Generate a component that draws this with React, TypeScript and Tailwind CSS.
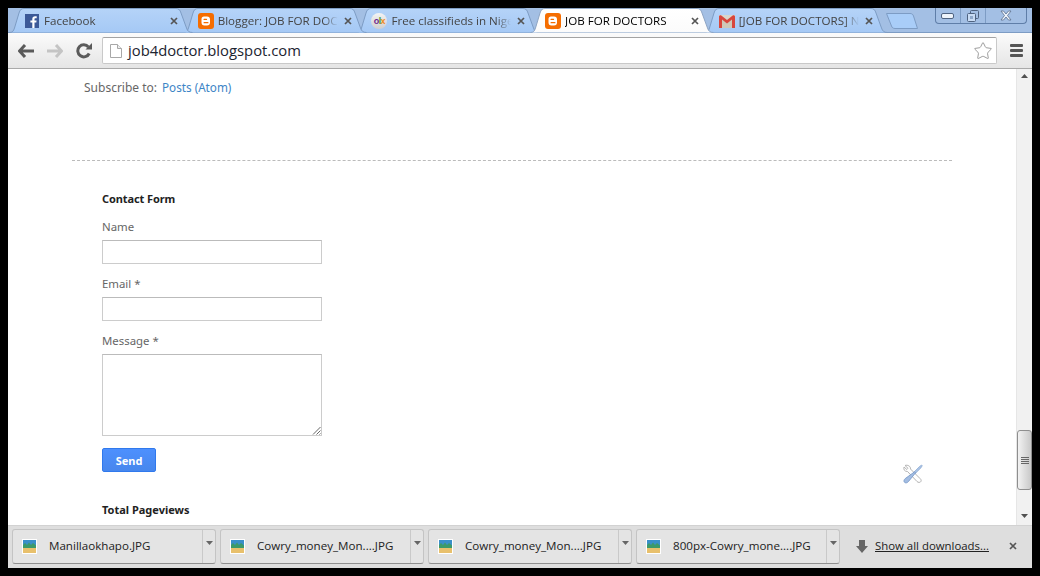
import { ReactNode } from "react";
import { Star } from "lucide-react";

const uiFont = "font-['Open_Sans','Noto_Sans',sans-serif]";
const pageFont = "font-['Noto_Sans','Open_Sans',sans-serif]";

function BloggerIcon() {
  return (
    <svg width="16" height="16" viewBox="0 0 16 16">
      <rect width="16" height="16" rx="3" fill="#f56d00" />
      <path d="M6 3.500h3a3 3 0 0 1 3 3V9.500a3 3 0 0 1-3 3H6.500a3 3 0 0 1-3-3V6a2.500 2.500 0 0 1 2.500-2.500z" fill="#fff" />
      <rect x="5.500" y="5.700" width="3.600" height="1.300" rx=".6" fill="#f56d00" />
      <rect x="5.500" y="9" width="5" height="1.300" rx=".6" fill="#f56d00" />
    </svg>
  );
}

function FacebookIcon() {
  return (
    <svg width="14" height="14" viewBox="0 0 14 14">
      <rect width="14" height="14" fill="#3b5998" />
      <path d="M9.500 14V8.600h1.800l.3-2.100H9.500V5.200c0-.6.200-1 1-1h1.200V2.300c-.3 0-.9-.1-1.600-.1-1.700 0-2.800 1-2.800 2.800v1.500H5.400v2.100h1.900V14z" fill="#fff" />
    </svg>
  );
}

function OlxIcon() {
  return (
    <span className="flex h-4 w-4 items-center justify-center rounded-full bg-gradient-to-b from-[#f4f4f4] to-[#cfcfcf] font-['Liberation_Sans',sans-serif] text-[9px] leading-none font-bold tracking-[-0.6px]">
      <span className="text-[#6d2a8c]">o</span>
      <span className="text-[#4c9a3a]">l</span>
      <span className="text-[#ee8a1d]">x</span>
    </span>
  );
}

function GmailIcon() {
  return (
    <svg width="16" height="13" viewBox="0 0 16 13">
      <rect width="16" height="13" fill="#d9d6cc" />
      <path d="M3 13V4l5 4 5-4v9z" fill="#cfc9b8" />
      <path d="M0 13V1.500C0 .5 1.300-.3 2.300.5L8 5l5.700-4.500c1-.8 2.300 0 2.300 1V13h-3V4.500L8 8.400 3 4.500V13z" fill="#d8473d" />
    </svg>
  );
}

type TabData = { title: string; icon: ReactNode; active?: boolean; order: string };

const tabs: TabData[] = [
  { title: "Facebook", icon: <FacebookIcon />, order: "z-[5]" },
  { title: "Blogger: JOB FOR DOCTORS", icon: <BloggerIcon />, order: "z-[4]" },
  { title: "Free classifieds in Nigeria", icon: <OlxIcon />, order: "z-[3]" },
  { title: "JOB FOR DOCTORS", icon: <BloggerIcon />, active: true, order: "z-[6]" },
  { title: "[JOB FOR DOCTORS] New comment", icon: <GmailIcon />, order: "z-[2]" },
];

function Tab({ title, icon, active, order }: TabData) {
  return (
    <div className={`relative -ml-[10.3px] h-[25px] w-[184px] shrink-0 first:ml-0 ${order}`}>
      <svg className="absolute top-0 left-0" width="184" height="25" viewBox="0 0 184 25">
        <defs>
          <linearGradient id="tabIdle" x1="0" y1="0" x2="0" y2="1">
            <stop offset="0" stopColor="#b5d3f8" />
            <stop offset="1" stopColor="#a5c9f5" />
          </linearGradient>
          <linearGradient id="tabOn" x1="0" y1="0" x2="0" y2="1">
            <stop offset="0" stopColor="#ffffff" />
            <stop offset="1" stopColor="#fbfbfb" />
          </linearGradient>
        </defs>
        <path
          d="M0.500 24.500C3.500 24.500 4.500 23 5.500 20L10 5C11 2 12 .5 15 .5H167C170 .5 171 2 172 5L177.500 20C178.500 23 180 24.500 183.500 24.500"
          fill={active ? "url(#tabOn)" : "url(#tabIdle)"}
          stroke={active ? "#8ea5c4" : "#7d9cc4"}
        />
      </svg>
      <div className={`relative flex h-[25px] items-center pt-px pr-2 pl-[15px] ${uiFont} text-[11.6px]`}>
        <span className="flex h-4 w-4 shrink-0 items-center justify-center">{icon}</span>
        <span
          className={`ml-1 w-[120px] shrink-0 overflow-hidden whitespace-nowrap [mask-image:linear-gradient(to_right,black_88%,transparent)] ${
            active ? "text-black" : "text-[#444]"
          }`}
        >
          {title}
        </span>
        <svg className="ml-1.5 shrink-0" width="8" height="8" viewBox="0 0 8 8">
          <path d="M1 1l6 6M7 1L1 7" stroke="#555" strokeWidth="1.700" />
        </svg>
      </div>
    </div>
  );
}

function TabStrip() {
  return (
    <div className="relative flex h-[25px] shrink-0 items-start bg-[#a3bfe4] pl-px">
      {tabs.map((tab) => (
        <Tab key={tab.title} {...tab} />
      ))}
      <svg className="relative mt-[5px] ml-[-2px] shrink-0" width="33" height="16" viewBox="0 0 33 16">
        <path
          d="M.500.500H24C26 .500 27 1.500 27.500 3L31.500 15.500H9C7 15.500 6 14.500 5.500 13z"
          fill="#a9cdf8"
          stroke="#7d9cc4"
        />
      </svg>
      <WindowControls />
      <div className="absolute right-0 bottom-0 left-0 h-px bg-[#7d9cc4]" />
    </div>
  );
}

function WindowControls() {
  return (
    <div className="relative ml-4 flex h-4 w-[92px] shrink-0 rounded-b-[4px] border border-t-0 border-[#5f7ea8] bg-[#a3bfe4]">
      <div className="flex w-[25px] items-center justify-center border-r border-[#7d9cc4]">
        <svg width="13" height="6" viewBox="0 0 13 6">
          <rect x=".500" y=".500" width="12" height="5" rx="1.500" fill="#eef4fb" stroke="#4f6380" />
        </svg>
      </div>
      <div className="flex w-[25px] items-center justify-center border-r border-[#7d9cc4]">
        <svg width="12" height="12" viewBox="0 0 12 12">
          <rect x="3.500" y=".500" width="8" height="8" rx="1" fill="none" stroke="#4f6380" />
          <rect x=".500" y="3.500" width="8" height="8" rx="1" fill="#c9dcf4" stroke="#4f6380" />
          <rect x="3" y="6" width="3" height="3" fill="#8fa9cb" />
        </svg>
      </div>
      <div className="flex flex-1 items-center justify-center">
        <svg width="12" height="11" viewBox="0 0 12 11">
          <path d="M1 1h2.500L6 4l2.500-3H11L7.500 5.500 11 10H8.500L6 7l-2.500 3H1l3.500-4.500z" fill="#eef4fb" stroke="#5b6f8c" strokeWidth=".8" />
        </svg>
      </div>
    </div>
  );
}

function Toolbar() {
  return (
    <div className="flex h-9 shrink-0 items-center border-b border-[#a9a9a9] bg-gradient-to-b from-[#fbfbfb] to-[#e5e5e5] pr-[9px] pl-2.5">
      <svg width="16" height="14" viewBox="0 0 16 14">
        <path d="M7 1L1.500 7 7 13M2 7h14" fill="none" stroke="#5a5a5a" strokeWidth="3" />
      </svg>
      <svg className="ml-[13px]" width="16" height="14" viewBox="0 0 16 14">
        <path d="M9 1l5.500 6L9 13M14 7H0" fill="none" stroke="#c4c4c4" strokeWidth="3" />
      </svg>
      <svg className="ml-[13px]" width="16" height="16" viewBox="0 0 16 16">
        <path d="M13.200 10.500A6 6 0 1 1 12.400 4" fill="none" stroke="#5a5a5a" strokeWidth="3" />
        <path d="M9.500 6.500H16V0z" fill="#5a5a5a" />
      </svg>
      <div className="ml-[10px] flex h-[27px] w-[895px] shrink-0 items-center rounded-[2px] border border-[#c9c9c9] border-t-[#a3a3a3] bg-white pr-[3px] pl-[7px]">
        <svg width="12" height="14" viewBox="0 0 12 14">
          <path d="M.500.500H7.500L11.500 4.500V13.500H.500z" fill="#fff" stroke="#a8a8a8" />
          <path d="M7.500.500V4.500H11.500" fill="#eee" stroke="#a8a8a8" />
        </svg>
        <span className={`ml-[6px] flex-1 ${uiFont} text-[14.8px] text-[#1c2430]`}>job4doctor.blogspot.com</span>
        <Star className="text-[#8a8a8a]" size={20} strokeWidth={1} />
      </div>
      <div className="ml-[13px] flex w-[13px] flex-col gap-[2px]">
        <div className="h-[3px] rounded-[1px] bg-[#555]" />
        <div className="h-[3px] rounded-[1px] bg-[#555]" />
        <div className="h-[3px] rounded-[1px] bg-[#555]" />
      </div>
    </div>
  );
}

function ToolsIcon() {
  return (
    <svg width="20" height="20" viewBox="0 0 20 20">
      <path
        d="M2 1.500L5 4.300 3.800 5.500 1 3C.300 5.500 1.500 7.500 4.500 7.500L14 17.500C15 18.800 17.500 18.700 18 17.300 18.500 16 17.800 15.300 17 14.500L7.500 5C7.800 2.500 5 .500 2 1.500z"
        fill="#fff"
        stroke="#b4b4b4"
        strokeWidth="1"
      />
      <path d="M10.500 8.500L16.500 2.500 18.500 1 19.300 1.800 17.800 4 11.800 10z" fill="#a9c3e6" stroke="#7f9fcb" strokeWidth=".6" />
      <path d="M11.600 7.800L12.600 8.800 5.500 17.500C4.300 19 2.500 19.300 1.500 18.300.500 17.300.900 15.700 2.300 14.500z" fill="#a3bde2" stroke="#7396c6" strokeWidth=".8" />
    </svg>
  );
}

function PageScrollbar() {
  return (
    <div className="flex w-4 shrink-0 flex-col items-center border-l border-[#e6e6e6] bg-[#f1f1f1]">
      <svg className="mt-[5px]" width="7" height="4" viewBox="0 0 7 4">
        <path d="M3.500 0L7 4H0z" fill="#505050" />
      </svg>
      <div className="mt-[352px] flex h-[60px] w-[15px] flex-col items-center justify-center gap-px rounded-[3px] border border-[#8e8e8e] bg-gradient-to-r from-[#f2f2f2] to-[#c9c9c9]">
        <div className="h-px w-2 bg-[#666]" />
        <div className="h-px w-2 bg-[#666]" />
        <div className="h-px w-2 bg-[#666]" />
        <div className="h-px w-2 bg-[#666]" />
      </div>
      <svg className="mt-6" width="7" height="4" viewBox="0 0 7 4">
        <path d="M0 0H7L3.500 4z" fill="#505050" />
      </svg>
    </div>
  );
}

function Field({ label, className }: { label: string; className: string }) {
  return (
    <div className="flex flex-col">
      <label className="h-4 text-[11.4px] leading-4 text-[#666]">{label}</label>
      <div className={`mt-[5px] w-[220px] border border-[#ccc] border-t-[#bbb] ${className}`} />
    </div>
  );
}

function PageContent() {
  return (
    <div className={`relative flex-1 overflow-hidden bg-white ${pageFont}`}>
      <p className="mt-[10px] ml-[76px] flex h-4 items-baseline gap-[5px] text-xs leading-4 text-[#666]">
        <span>Subscribe to:</span>
        <span className="text-[11.7px] text-[#3d85c6]">Posts (Atom)</span>
      </p>
      <div className="mt-[65px] ml-16 w-[880px] border-t border-dashed border-[#bbb]" />
      <div className="mt-[30px] ml-[94px] flex flex-col">
        <h2 className="h-4 text-[11px] leading-4 font-bold tracking-[-0.1px] text-[#222]">Contact Form</h2>
        <div className="mt-3 flex flex-col gap-3">
          <Field label="Name" className="h-6" />
          <Field label="Email *" className="h-6" />
          <Field label="Message *" className="h-[82px]" />
        </div>
        <button className="mt-3 h-6 w-[54px] rounded-[2px] border border-[#3079ed] bg-gradient-to-b from-[#4d90fe] to-[#4787ed] pt-[2px] text-[11px] font-bold text-white">
          Send
        </button>
        <h2 className="mt-[30px] h-4 text-[11px] leading-4 font-bold text-[#222]">Total Pageviews</h2>
      </div>
      <div className="absolute top-[395px] left-[895px]">
        <ToolsIcon />
      </div>
      <svg className="absolute top-[357px] left-[304px]" width="9" height="9" viewBox="0 0 9 9">
        <path d="M8.500 1L1 8.500M8.500 4.500L4.500 8.500M8.500 7.500L7.500 8.500" stroke="#666" />
      </svg>
    </div>
  );
}

function ImageThumb() {
  return (
    <svg width="15" height="15" viewBox="0 0 15 15">
      <rect width="15" height="15" fill="#fff" />
      <rect x="1" y="1" width="13" height="6" fill="#3a8fc9" />
      <rect x="1" y="9" width="13" height="5" fill="#e8c06c" />
      <path d="M1 9V6l2-2 2 2 2-2.500L9 6l2-2 3 2.500V9z" fill="#3d9a6a" />
    </svg>
  );
}

const downloads = ["Manillaokhapo.JPG", "Cowry_money_Mon....JPG", "Cowry_money_Mon....JPG", "800px-Cowry_mone....JPG"];

function DownloadItem({ name }: { name: string }) {
  return (
    <div className="flex h-[35px] w-[204px] shrink-0 rounded-[3px] border border-[#c4c4c4] border-b-[#8f8f8f] bg-[#e4e4e4]">
      <div className="flex flex-1 items-center pl-[9px]">
        <ImageThumb />
        <span className="ml-3 text-[11.6px] text-[#222]">{name}</span>
      </div>
      <div className="flex w-[13px] justify-center border-l border-[#c9c9c9] pt-[11px]">
        <svg width="7" height="4" viewBox="0 0 7 4">
          <path d="M0 0H7L3.500 4z" fill="#666" />
        </svg>
      </div>
    </div>
  );
}

function DownloadBar() {
  return (
    <div className={`flex h-[43px] shrink-0 items-center gap-1 border-t border-[#d2d2d2] bg-[#dedede] pb-[2px] pl-1 ${uiFont}`}>
      {downloads.map((name, i) => (
        <DownloadItem key={i} name={name} />
      ))}
      <svg className="ml-3" width="12" height="13" viewBox="0 0 12 13">
        <path d="M3 0H9V6H12L6 13 0 6H3z" fill="#666" />
      </svg>
      <span className="ml-[3px] text-[11.4px] text-[#222] underline">Show all downloads...</span>
      <svg className="ml-[16px]" width="8" height="8" viewBox="0 0 8 8">
        <path d="M1 1l6 6M7 1L1 7" stroke="#555" strokeWidth="1.700" />
      </svg>
    </div>
  );
}

export default function App() {
  return (
    <div className="flex h-[576px] w-[1040px] flex-col overflow-hidden bg-black p-2">
      <TabStrip />
      <Toolbar />
      <div className="flex min-h-0 flex-1">
        <PageContent />
        <PageScrollbar />
      </div>
      <DownloadBar />
    </div>
  );
}
